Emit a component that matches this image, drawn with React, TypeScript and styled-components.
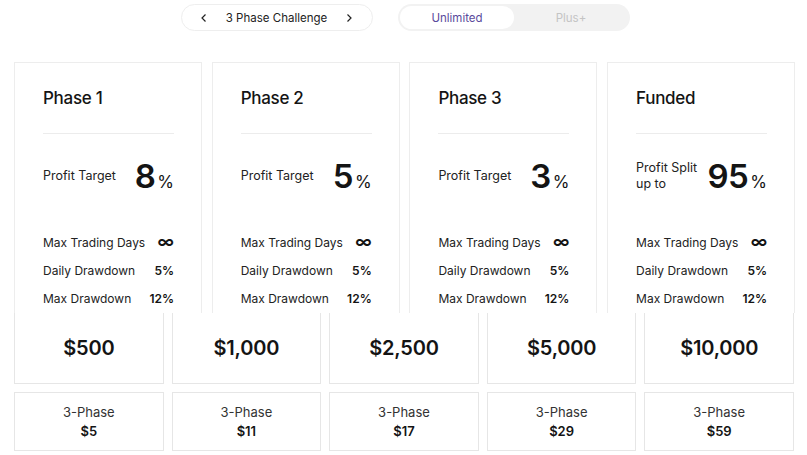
import React from "react";
import styled, { createGlobalStyle } from "styled-components";

const Global = createGlobalStyle`
  html, body { margin: 0; padding: 0; background: #fff; }
  body { font-family: "Inter", "Noto Sans", sans-serif; color: #141414; }
`;

const Page = styled.div`
  width: 807px;
  height: 455px;
  padding: 4px 12px 0 14px;
  box-sizing: border-box;
  overflow: hidden;
`;

const TopBar = styled.div`
  display: flex;
  justify-content: center;
  gap: 25px;
  height: 27px;
  padding-left: 2px;
`;

const Selector = styled.div`
  width: 192px;
  box-sizing: border-box;
  border: 1px solid #eeeeee;
  border-radius: 14px;
  display: flex;
  align-items: center;
  padding: 0 17px 0 16px;
  justify-content: space-between;
  font-size: 11.5px;
  color: #222;
`;

const Chevron = styled.svg`
  width: 12px;
  height: 12px;
`;

const Toggle = styled.div`
  width: 232px;
  box-sizing: border-box;
  background: #f2f2f2;
  border-radius: 14px;
  padding: 2px;
  display: flex;
`;

const Segment = styled.div<{ $active?: boolean }>`
  flex: 1;
  border-radius: 12px;
  display: flex;
  align-items: center;
  justify-content: center;
  font-size: 11.5px;
  font-weight: 400;
  background: ${(p) => (p.$active ? "#ffffff" : "transparent")};
  color: ${(p) => (p.$active ? "#5a4a9c" : "#c4c4c4")};
`;

const Phases = styled.div`
  margin-top: 31px;
  display: grid;
  grid-template-columns: repeat(4, 188px);
  gap: 9.7px;
`;

const PhaseCard = styled.div`
  height: 251px;
  box-sizing: border-box;
  border: 1px solid #ededed;
  border-bottom: none;
  padding: 23px 27px 0 28px;
  display: flex;
  flex-direction: column;
`;

const Title = styled.div`
  font-size: 17px;
  font-weight: 500;
  line-height: 24px;
  letter-spacing: -0.3px;
`;

const Divider = styled.div`
  height: 1px;
  background: #ececec;
  margin-top: 23px;
`;

const ProfitRow = styled.div`
  margin-top: 20px;
  height: 44px;
  display: flex;
  align-items: center;
  justify-content: space-between;
`;

const ProfitLabel = styled.div`
  font-size: 12.5px;
  line-height: 16px;
  color: #222;
`;

const Big = styled.div`
  display: flex;
  align-items: baseline;
  gap: 2px;
`;

const BigNum = styled.span`
  font-size: 33px;
  font-weight: 600;
  line-height: 40px;
  letter-spacing: -0.5px;
`;

const Pct = styled.span`
  font-size: 17px;
  font-weight: 400;
`;

const Stats = styled.div`
  margin-top: 30px;
  display: flex;
  flex-direction: column;
`;

const StatRow = styled.div`
  height: 28px;
  display: flex;
  align-items: center;
  justify-content: space-between;
  font-size: 12px;
  color: #222;
`;

const StatValue = styled.span<{ $inf?: boolean }>`
  font-weight: 600;
  font-size: ${(p) => (p.$inf ? "17px" : "12px")};
  color: #141414;
`;

const Prices = styled.div`
  width: 780px;
  display: grid;
  grid-template-columns: repeat(5, 1fr);
  gap: 8px;
`;

const PriceBox = styled.div`
  height: 71px;
  box-sizing: border-box;
  border: 1px solid #e6e6e6;
  border-top: none;
  background: #fff;
  display: flex;
  align-items: center;
  justify-content: center;
  font-size: 20px;
  font-weight: 600;
  letter-spacing: -0.2px;
`;

const Tiers = styled.div`
  width: 780px;
  margin-top: 8px;
  display: grid;
  grid-template-columns: repeat(5, 1fr);
  gap: 8px;
`;

const TierBox = styled.div`
  height: 59px;
  box-sizing: border-box;
  border: 1px solid #e6e6e6;
  display: flex;
  flex-direction: column;
  align-items: center;
  justify-content: center;
  font-size: 13px;
  line-height: 19px;
  color: #333;
`;

const TierPrice = styled.span`
  font-weight: 600;
  color: #141414;
`;

const phases = [
  { title: "Phase 1", label: <>Profit Target</>, value: "8" },
  { title: "Phase 2", label: <>Profit Target</>, value: "5" },
  { title: "Phase 3", label: <>Profit Target</>, value: "3" },
  { title: "Funded", label: <>Profit Split<br />up to</>, value: "95" },
];

const prices = [
  { amount: "$500", fee: "$5" },
  { amount: "$1,000", fee: "$11" },
  { amount: "$2,500", fee: "$17" },
  { amount: "$5,000", fee: "$29" },
  { amount: "$10,000", fee: "$59" },
];

export default function App() {
  return (
    <Page>
      <Global />
      <TopBar>
        <Selector>
          <Chevron viewBox="0 0 12 12">
            <path d="M7.5 2.5 L4 6 L7.5 9.5" fill="none" stroke="#222" strokeWidth="1.2" />
          </Chevron>
          <span>3 Phase Challenge</span>
          <Chevron viewBox="0 0 12 12">
            <path d="M4.5 2.5 L8 6 L4.5 9.5" fill="none" stroke="#222" strokeWidth="1.2" />
          </Chevron>
        </Selector>
        <Toggle>
          <Segment $active>Unlimited</Segment>
          <Segment>Plus+</Segment>
        </Toggle>
      </TopBar>
      <Phases>
        {phases.map((p) => (
          <PhaseCard key={p.title}>
            <Title>{p.title}</Title>
            <Divider />
            <ProfitRow>
              <ProfitLabel>{p.label}</ProfitLabel>
              <Big>
                <BigNum>{p.value}</BigNum>
                <Pct>%</Pct>
              </Big>
            </ProfitRow>
            <Stats>
              <StatRow>
                <span>Max Trading Days</span>
                <StatValue $inf>∞</StatValue>
              </StatRow>
              <StatRow>
                <span>Daily Drawdown</span>
                <StatValue>5%</StatValue>
              </StatRow>
              <StatRow>
                <span>Max Drawdown</span>
                <StatValue>12%</StatValue>
              </StatRow>
            </Stats>
          </PhaseCard>
        ))}
      </Phases>
      <Prices>
        {prices.map((p) => (
          <PriceBox key={p.amount}>{p.amount}</PriceBox>
        ))}
      </Prices>
      <Tiers>
        {prices.map((p) => (
          <TierBox key={p.amount}>
            <span>3-Phase</span>
            <TierPrice>{p.fee}</TierPrice>
          </TierBox>
        ))}
      </Tiers>
    </Page>
  );
}
